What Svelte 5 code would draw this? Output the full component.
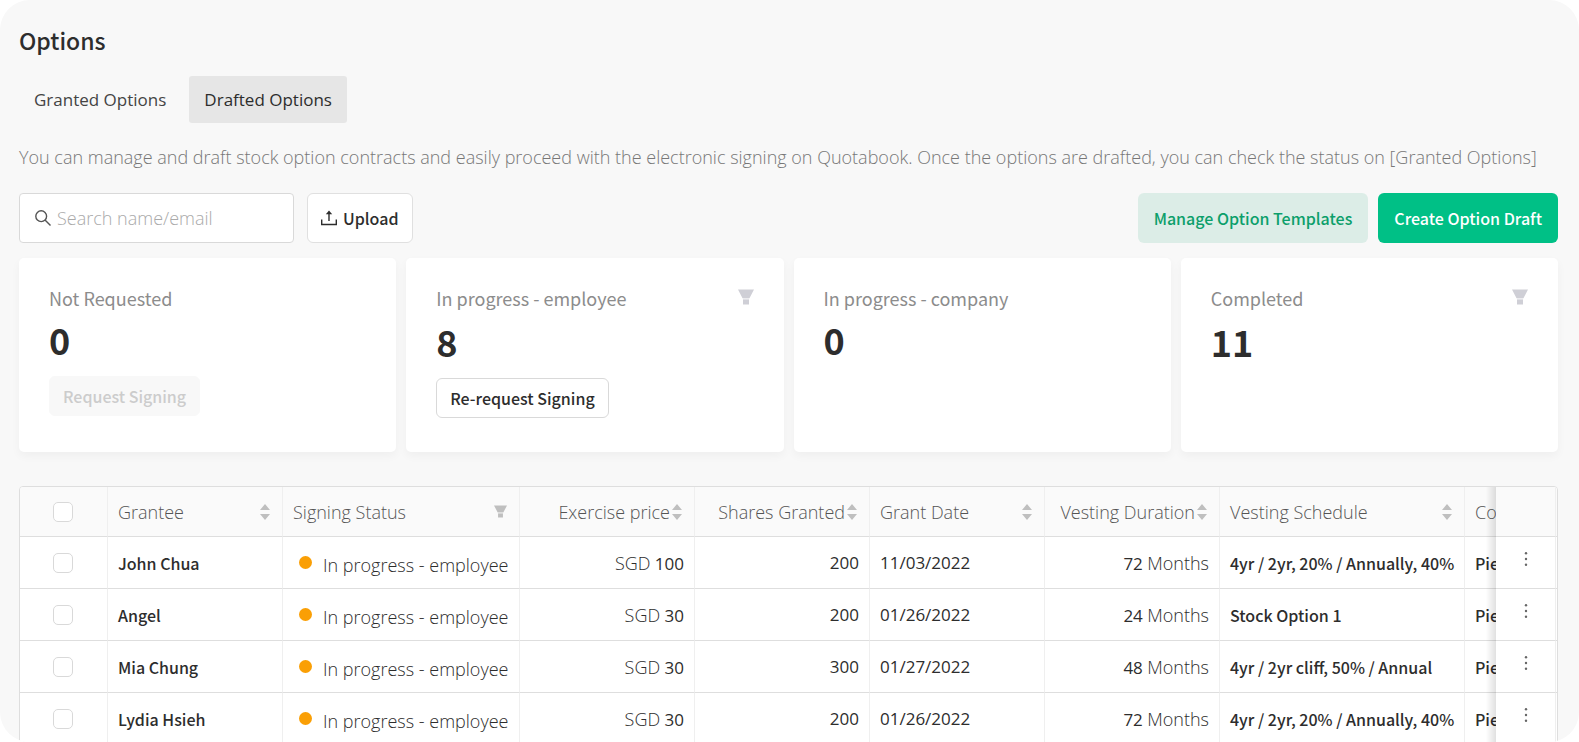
<script>
  let search = $state('');
  let tab = $state('Drafted Options');

  const tabs = ['Granted Options', 'Drafted Options'];

  const cards = [
    { label: 'Not Requested', count: 0, action: 'Request Signing', disabled: true },
    { label: 'In progress - employee', count: 8, action: 'Re-request Signing', filter: true },
    { label: 'In progress - company', count: 0 },
    { label: 'Completed', count: 11, filter: true }
  ];

  const columns = [
    { label: 'Grantee', icon: 'sort' },
    { label: 'Signing Status', icon: 'filter', size: 'status-col' },
    { label: 'Exercise price', icon: 'sort', right: true },
    { label: 'Shares Granted', icon: 'sort', right: true },
    { label: 'Grant Date', icon: 'sort' },
    { label: 'Vesting Duration', icon: 'sort', right: true },
    { label: 'Vesting Schedule', icon: 'sort', size: 'schedule-col' },
    { label: 'Company' }
  ];

  const status = 'In progress - employee';
  const rows = [
    { name: 'John Chua', price: 100, shares: 200, date: '11/03/2022', months: 72, schedule: '4yr / 2yr, 20% / Annually, 40%' },
    { name: 'Angel', price: 30, shares: 200, date: '01/26/2022', months: 24, schedule: 'Stock Option 1' },
    { name: 'Mia Chung', price: 30, shares: 300, date: '01/27/2022', months: 48, schedule: '4yr / 2yr cliff, 50% / Annual' },
    { name: 'Lydia Hsieh', price: 30, shares: 200, date: '01/26/2022', months: 72, schedule: '4yr / 2yr, 20% / Annually, 40%' }
  ];
</script>

{#snippet filterIcon()}
  <svg class="filter" viewBox="0 0 16 16" width="16" height="16" aria-hidden="true">
    <path d="M0 0.5h16l-4.4 8.5H4.4z M5 10.5h6v5H5z" fill="currentColor" />
    <path d="M4.4 9h7.2L11 10.5H5z" fill="currentColor" opacity="0.4" />
  </svg>
{/snippet}

{#snippet sortIcon()}
  <svg class="sort" viewBox="0 0 10 16" width="10" height="16" aria-hidden="true">
    <path d="M5 0l5 6H0z M0 10h10l-5 6z" fill="currentColor" />
  </svg>
{/snippet}

<main>
  <h1>Options</h1>

  <nav>
    {#each tabs as name}
      <button class="tab" class:active={tab === name} onclick={() => (tab = name)}>{name}</button>
    {/each}
  </nav>

  <p>
    You can manage and draft stock option contracts and easily proceed with the electronic signing on
    Quotabook. Once the options are drafted, you can check the status on [Granted Options]
  </p>

  <div class="toolbar">
    <label class="search">
      <svg viewBox="0 0 16 16" width="16" height="16" fill="none" stroke="#555" stroke-width="1.4" aria-hidden="true">
        <circle cx="6.2" cy="6.2" r="5.4" />
        <path d="M10 10l5.5 5.5" />
      </svg>
      <input type="text" placeholder="Search name/email" aria-label="Search name/email" bind:value={search} />
    </label>
    <button class="btn upload">
      <svg viewBox="0 0 16 16" width="16" height="16" fill="none" stroke="#2d2d2d" stroke-width="1.4" aria-hidden="true">
        <path d="M0.7 9.5v5h14.6v-5M8 11V2" />
        <path d="M4.8 4.2L8 0.5l3.2 3.7z" fill="#2d2d2d" stroke="none" />
      </svg>
      Upload
    </button>
    <div class="right">
      <button class="btn templates">Manage Option Templates</button>
      <button class="btn create">Create Option Draft</button>
    </div>
  </div>

  <section class="cards">
    {#each cards as card}
      <article>
        <div class="card-head">
          <h2>{card.label}</h2>
          {#if card.filter}
            <button class="icon-btn" aria-label="Filter {card.label}">{@render filterIcon()}</button>
          {/if}
        </div>
        <strong>{card.count}</strong>
        {#if card.action}
          <button class="btn small" disabled={card.disabled}>{card.action}</button>
        {/if}
      </article>
    {/each}
  </section>

  <div class="table-wrap">
    <table>
      <thead>
        <tr>
          <th class="check"><input type="checkbox" aria-label="Select all" /></th>
          {#each columns as col}
            <th class={col.size}>
              <div class="th" class:end={col.right}>
                <span>{col.label}</span>
                {#if col.icon === 'sort'}{@render sortIcon()}{/if}
                {#if col.icon === 'filter'}{@render filterIcon()}{/if}
              </div>
            </th>
          {/each}
          <th class="menu"></th>
        </tr>
      </thead>
      <tbody>
        {#each rows as row}
          <tr>
            <td class="check"><input type="checkbox" aria-label="Select {row.name}" /></td>
            <td class="medium">{row.name}</td>
            <td><div class="status"><i></i><span>{status}</span></div></td>
            <td class="num"><span>SGD</span> {row.price}</td>
            <td class="num">{row.shares}</td>
            <td>{row.date}</td>
            <td class="num">{row.months} <span>Months</span></td>
            <td class="medium">{row.schedule}</td>
            <td class="medium">Pied Piper</td>
            <td class="menu">
              <button class="icon-btn" aria-label="More">
                <svg viewBox="0 0 4 14" width="4" height="14" fill="#666" aria-hidden="true">
                  <circle cx="2" cy="1.2" r="1.2" />
                  <circle cx="2" cy="7" r="1.2" />
                  <circle cx="2" cy="12.8" r="1.2" />
                </svg>
              </button>
            </td>
          </tr>
        {/each}
      </tbody>
    </table>
  </div>
</main>

<style>
  :global(body) {
    background: #fff;
  }

  main {
    box-sizing: border-box;
    height: 100vh;
    overflow: hidden;
    padding: 22px 21px 0 19px;
    border-radius: 30px;
    background: #f8f8f8;
    color: #2d2d2d;
    font-family: 'Open Sans', 'Noto Sans', sans-serif;
    font-size: 17px;
    font-weight: 300;
  }

  button,
  input {
    font: inherit;
    color: inherit;
  }

  button {
    cursor: pointer;
  }

  h1 {
    margin: 0;
    font-family: 'Noto Sans CJK KR', sans-serif;
    font-size: 23px;
    font-weight: 500;
    line-height: 36px;
  }

  nav {
    display: flex;
    gap: 8px;
    margin-top: 18px;
  }

  .tab {
    height: 47px;
    padding: 0 15px;
    border: 0;
    border-radius: 3px;
    background: none;
    color: #444;
    font-weight: 400;
  }

  .tab.active {
    background: #e6e6e6;
    color: #2d2d2d;
  }

  p {
    margin: 20px 0 22px;
    color: #777;
    font-size: 18px;
    line-height: 28px;
    white-space: nowrap;
  }

  .toolbar {
    display: flex;
    gap: 13px;
  }

  .search {
    display: flex;
    align-items: center;
    gap: 6px;
    box-sizing: border-box;
    width: 275px;
    height: 50px;
    padding: 0 15px;
    border: 1px solid #d9d9d9;
    border-radius: 4px;
    background: #fff;
  }

  .search input {
    flex: 1;
    min-width: 0;
    padding: 0;
    border: 0;
    outline: 0;
    background: none;
    font-size: 18px;
  }

  .search input::placeholder {
    color: #aaa;
    opacity: 1;
  }

  .btn {
    box-sizing: border-box;
    height: 50px;
    padding: 0 15px;
    border: 1px solid transparent;
    border-radius: 6px;
    font-family: 'Noto Sans CJK KR', sans-serif;
    font-size: 16px;
    font-weight: 500;
    white-space: nowrap;
  }

  .upload {
    display: flex;
    align-items: center;
    gap: 6px;
    padding: 0 14px 0 13px;
    border-color: #e0e0e0;
    background: #fff;
  }

  .right {
    display: flex;
    gap: 10px;
    margin-left: auto;
  }

  .templates {
    background: #dcede7;
    color: #0c9f6b;
  }

  .create {
    background: #00c086;
    color: #fff;
  }

  .cards {
    display: grid;
    grid-template-columns: repeat(4, 1fr);
    gap: 10px;
    margin-top: 15px;
  }

  article {
    box-sizing: border-box;
    min-height: 194px;
    padding: 27px 30px;
    border-radius: 5px;
    background: #fff;
    box-shadow: 0 4px 10px rgba(0, 0, 0, 0.04);
  }

  .card-head {
    display: flex;
    justify-content: space-between;
    align-items: flex-start;
  }

  h2 {
    margin: 0;
    color: #8c8c8c;
    font-family: 'Noto Sans CJK KR', sans-serif;
    font-size: 18px;
    font-weight: 400;
    line-height: 26px;
  }

  strong {
    display: block;
    margin: 5px 0 14px;
    font-family: 'Noto Sans CJK KR', sans-serif;
    font-size: 36px;
    font-weight: 700;
    line-height: 46px;
  }

  .small {
    height: 40px;
    padding: 0 13px;
    border-color: #d9d9d9;
    background: #fff;
  }

  .small:disabled {
    border-color: #f8f8f8;
    background: #f8f8f8;
    color: #ccc;
  }

  .icon-btn {
    display: inline-flex;
    padding: 0;
    border: 0;
    background: none;
  }

  .card-head .icon-btn {
    padding: 4px 0 8px;
    color: #cfcfd6;
  }

  .table-wrap {
    margin-top: 34px;
    overflow: hidden;
    border: 1px solid #dedede;
    border-radius: 4px;
    background: #fff;
  }

  table {
    width: 1680px;
    table-layout: fixed;
    border-collapse: separate;
    border-spacing: 0;
  }

  th,
  td {
    box-sizing: border-box;
    height: 52px;
    padding: 0 10px;
    border-right: 1px solid #efefef;
    border-bottom: 1px solid #dedede;
    background: #fff;
    text-align: left;
    white-space: nowrap;
  }

  th {
    width: 175px;
    height: 50px;
    background: #fafafa;
    color: #555;
    font-size: 18px;
    font-weight: 300;
  }

  .status-col {
    width: 237px;
  }

  .schedule-col {
    width: 245px;
  }

  .th {
    display: flex;
    justify-content: space-between;
    align-items: center;
  }

  .th.end {
    justify-content: flex-end;
    gap: 2px;
  }

  .sort,
  .th .filter {
    flex: none;
    color: #bfbfbf;
  }

  .sort {
    margin-right: 2px;
  }

  .th .filter {
    width: 13px;
    height: 13px;
    margin-right: 2px;
  }

  .check {
    width: 88px;
    padding-right: 12px;
    text-align: center;
  }

  .check input {
    appearance: none;
    box-sizing: border-box;
    display: block;
    width: 20px;
    height: 20px;
    margin: 0 auto;
    border: 1px solid #d9d9d9;
    border-radius: 5px;
    background: #fff;
  }

  .check input:checked {
    background: #00c086;
  }

  td {
    font-weight: 400;
  }

  td span {
    font-size: 18px;
    font-weight: 300;
  }

  .medium {
    font-family: 'Noto Sans CJK KR', sans-serif;
    font-size: 16px;
    font-weight: 500;
  }

  .num {
    text-align: right;
  }

  .status {
    display: flex;
    align-items: center;
    gap: 11px;
    padding-left: 6px;
  }

  .status span {
    padding-top: 4px;
  }

  .status i {
    width: 13px;
    height: 13px;
    border-radius: 50%;
    background: #fa9f05;
  }

  .menu {
    position: sticky;
    right: 1px;
    width: 60px;
    text-align: center;
  }

  /* shadow cast by the pinned column */
  .menu::before {
    content: '';
    position: absolute;
    top: 0;
    right: 100%;
    bottom: -1px;
    width: 10px;
    background: linear-gradient(to right, transparent, rgba(0, 0, 0, 0.12));
  }

  .menu .icon-btn {
    padding-bottom: 12px;
  }
</style>
